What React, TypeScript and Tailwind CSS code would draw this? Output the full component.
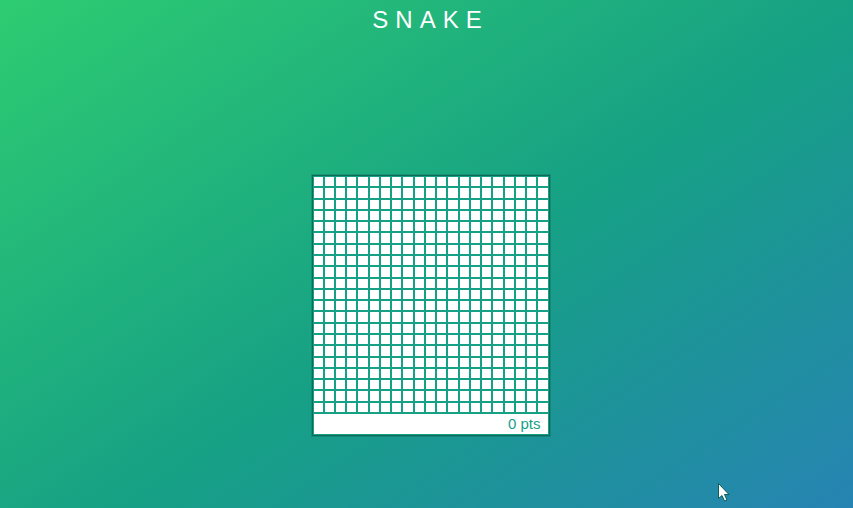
const GRID_SIZE = 21;

const cells = Array.from({ length: GRID_SIZE * GRID_SIZE }, (_, i) => i);

const Board = () => {
  return (
    <div className="grid h-[237px] grid-cols-[repeat(21,minmax(0,1fr))] grid-rows-[repeat(21,minmax(0,1fr))] gap-0.5 border-b-2 border-[#16a085] bg-[#16a085]">
      {cells.map((cell) => (
        <div key={cell} className="bg-white" />
      ))}
    </div>
  );
};

const Score = ({ points }: { points: number }) => {
  return (
    <p className="bg-white px-[7px] text-right text-[15px] leading-5 text-[#16a085]">
      {points} pts
    </p>
  );
};

const App = () => {
  return (
    <div className="relative flex min-h-screen flex-col items-center bg-[linear-gradient(146deg,#2ecc71,#16a085_55%,#2980b9_106%)] font-['Liberation_Sans',Arial,sans-serif]">
      <h1 className="pt-1 pl-2 text-2xl leading-8 tracking-[7px] text-white">SNAKE</h1>

      <main className="flex grow flex-col items-center justify-center pt-[67px] pl-2">
        <div className="w-[236px] border border-[#16a085] shadow-[0_0_0_1px_#0c6b58,0_0_0_2px_rgba(12,107,88,0.35)]">
          <Board />
          <Score points={0} />
        </div>
      </main>

      {/* Mouse pointer */}
      <svg className="pointer-events-none absolute right-[123px] bottom-[6px]" width="13" height="20" viewBox="0 0 13 20" aria-hidden="true">
        <path d="M1.5 1.5v15l3.5-3 2.5 5.5 2.5-1-2.5-5.5h4.5z" fill="#fff" stroke="#0b5f56" strokeWidth="1" />
      </svg>
    </div>
  );
};

export default App;
